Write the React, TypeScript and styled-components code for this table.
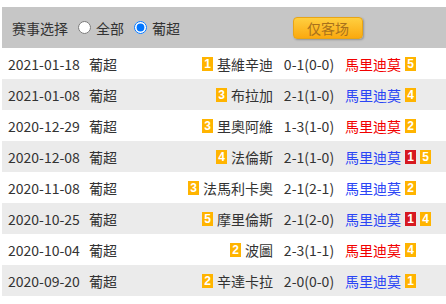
import * as React from 'react';
import styled, { createGlobalStyle } from 'styled-components';

const GlobalStyle = createGlobalStyle`
  body {
    margin: 0;
    background: #fff;
    font-family: "Noto Sans CJK SC", "Noto Sans", sans-serif;
    color: #333;
  }
`;

interface Match {
  date: string;
  league: string;
  homeRank: number;
  home: string;
  score: string;
  away: string;
  awayRed: boolean;
  awayCards?: number;
  awayRank: number;
}

const matches: Match[] = [
  { date: '2021-01-18', league: '葡超', homeRank: 1, home: '基維辛迪', score: '0-1(0-0)', away: '馬里迪莫', awayRed: true, awayRank: 5 },
  { date: '2021-01-08', league: '葡超', homeRank: 3, home: '布拉加', score: '2-1(1-0)', away: '馬里迪莫', awayRed: false, awayRank: 4 },
  { date: '2020-12-29', league: '葡超', homeRank: 3, home: '里奧阿維', score: '1-3(1-0)', away: '馬里迪莫', awayRed: true, awayRank: 2 },
  { date: '2020-12-08', league: '葡超', homeRank: 4, home: '法倫斯', score: '2-1(1-0)', away: '馬里迪莫', awayRed: false, awayCards: 1, awayRank: 5 },
  { date: '2020-11-08', league: '葡超', homeRank: 3, home: '法馬利卡奧', score: '2-1(2-1)', away: '馬里迪莫', awayRed: false, awayRank: 2 },
  { date: '2020-10-25', league: '葡超', homeRank: 5, home: '摩里倫斯', score: '2-1(2-0)', away: '馬里迪莫', awayRed: false, awayCards: 1, awayRank: 4 },
  { date: '2020-10-04', league: '葡超', homeRank: 2, home: '波圖', score: '2-3(1-1)', away: '馬里迪莫', awayRed: true, awayRank: 4 },
  { date: '2020-09-20', league: '葡超', homeRank: 2, home: '辛達卡拉', score: '2-0(0-0)', away: '馬里迪莫', awayRed: false, awayRank: 1 },
];

const Panel = styled.div`
  margin: 7px 0 0 2px;
  width: 444px;
`;

const FilterBar = styled.div`
  display: flex;
  align-items: center;
  height: 41px;
  padding-left: 10px;
  background: #c6c6c6;
  font-size: 14px;
  color: #333;
`;

const FilterLabel = styled.span`
  margin-right: 5px;
`;

const RadioLabel = styled.label`
  display: flex;
  align-items: center;
  margin-right: 5px;

  input {
    width: 13px;
    height: 13px;
    margin: 0 5px 0 5px;
  }
`;

const AwayOnlyButton = styled.button`
  margin-left: 108px;
  width: 70px;
  height: 22px;
  padding: 0;
  border: 1px solid #e8a516;
  border-radius: 4px;
  background: linear-gradient(#ffcf40, #fba90f);
  box-shadow: 1px 1px 2px rgba(0, 0, 0, 0.25);
  font-family: inherit;
  font-size: 14px;
  color: #a8711c;
  cursor: pointer;
`;

const Row = styled.div<{ $shaded: boolean }>`
  display: grid;
  grid-template-columns: 81px 60px 124px 72px 101px;
  align-items: center;
  height: 31px;
  padding-left: 6px;
  background: ${p => (p.$shaded ? '#ebebeb' : '#fff')};
  font-size: 14px;
  white-space: nowrap;
`;

const Cell = styled.div`
  display: flex;
  align-items: center;
`;

const HomeCell = styled(Cell)`
  justify-content: flex-end;
`;

const ScoreCell = styled(Cell)`
  justify-content: center;
`;

const TeamName = styled.span<{ $color?: string }>`
  color: ${p => p.$color || '#333'};
`;

const Badge = styled.span<{ $red?: boolean; $tight?: boolean }>`
  display: inline-flex;
  align-items: center;
  justify-content: center;
  width: 11px;
  height: 14px;
  background: ${p => (p.$red ? '#d71920' : '#ffb400')};
  color: #fff;
  font-family: "Liberation Sans", Arial, sans-serif;
  font-weight: bold;
  font-size: 12px;
  margin: 0 4px 0 ${p => (p.$tight ? 0 : 4)}px;
`;

export default function App() {
  return (
    <Panel>
      <GlobalStyle />
      <FilterBar>
        <FilterLabel>赛事选择</FilterLabel>
        <RadioLabel>
          <input type="radio" name="league" />
          全部
        </RadioLabel>
        <RadioLabel>
          <input type="radio" name="league" defaultChecked />
          葡超
        </RadioLabel>
        <AwayOnlyButton>仅客场</AwayOnlyButton>
      </FilterBar>
      {matches.map((m, i) => (
        <Row key={m.date} $shaded={i % 2 === 1}>
          <Cell>{m.date}</Cell>
          <Cell>{m.league}</Cell>
          <HomeCell>
            <Badge>{m.homeRank}</Badge>
            <TeamName>{m.home}</TeamName>
          </HomeCell>
          <ScoreCell>{m.score}</ScoreCell>
          <Cell>
            <TeamName $color={m.awayRed ? '#f20000' : '#2a45f5'}>{m.away}</TeamName>
            {m.awayCards ? <Badge $red>{m.awayCards}</Badge> : null}
            <Badge $tight={!!m.awayCards}>{m.awayRank}</Badge>
          </Cell>
        </Row>
      ))}
    </Panel>
  );
}
